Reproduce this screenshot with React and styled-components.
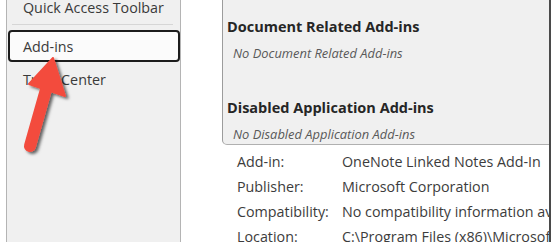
import React from 'react';
import styled, { createGlobalStyle } from 'styled-components';

const GlobalStyle = createGlobalStyle`
  html, body {
    margin: 0;
    padding: 0;
    background: #ffffff;
    overflow: hidden;
  }
  body {
    font-family: "Open Sans", "Noto Sans", Arial, sans-serif;
  }
`;

const Page = styled.div`
  position: relative;
  width: 551px;
  height: 242px;
  display: flex;
  overflow: hidden;
`;

const Nav = styled.nav`
  flex: 0 0 auto;
  margin-left: 6px;
  width: 173px;
  height: 242px;
  background: #f0f0f0;
  border-left: 1px solid #b4b4b4;
  border-right: 1px solid #b4b4b4;
  display: flex;
  flex-direction: column;
`;

const NavList = styled.div`
  margin-top: -9px;
  display: flex;
  flex-direction: column;
  gap: 1px;
`;

const NavItem = styled.div`
  height: 32px;
  box-sizing: border-box;
  margin: 0 0 0 1px;
  padding-left: 13px;
  display: flex;
  align-items: center;
  white-space: nowrap;
  font-size: 14.3px;
  color: #3a3a3a;
  border: 2px solid ${(p) => (p.$active ? '#1c1c1c' : 'transparent')};
  border-radius: 4px;
  background: ${(p) => (p.$active ? '#fbfbfb' : 'transparent')};
`;

const Separator = styled.div`
  height: 1px;
  margin: 0 7px 4px 5px;
  background: #d6d6d6;
`;

const Main = styled.div`
  flex: 0 0 auto;
  margin-left: 41px;
  width: 327px;
  display: flex;
  flex-direction: column;
  border-right: 2px solid #4a4a4a;
  overflow: hidden;
`;

const Panel = styled.div`
  height: 146px;
  box-sizing: border-box;
  padding: 17px 0 0 4px;
  background: #f0f0f0;
  border-left: 1px solid #9c9c9c;
  border-bottom: 1px solid #b0b0b0;
  border-bottom-left-radius: 5px;
`;

const Section = styled.section`
  margin-bottom: ${(p) => p.$gap || 0}px;
`;

const SectionTitle = styled.div`
  font-size: 14.5px;
  font-weight: 700;
  line-height: 20px;
  color: #262626;
  margin-bottom: 6px;
  white-space: nowrap;
`;

const Empty = styled.div`
  padding-left: 6px;
  font-size: 12.9px;
  font-style: italic;
  line-height: 20px;
  color: #595959;
  white-space: nowrap;
`;

const Details = styled.dl`
  margin: 4px 0 0 15px;
  display: grid;
  grid-template-columns: 105px minmax(0, 1fr);
  grid-auto-rows: 25px;
  align-items: center;
  white-space: nowrap;
  font-size: 14.3px;
  color: #3c3c3c;
`;

const Label = styled.dt`
  margin: 0;
`;

const Value = styled.dd`
  margin: 0;
  overflow: hidden;
`;

const Arrow = styled.svg`
  position: absolute;
  left: 0;
  top: 0;
  pointer-events: none;
`;

export default function App() {
  return (
    <>
      <GlobalStyle />
      <Page>
        <Nav>
          <NavList>
            <NavItem>Quick Access Toolbar</NavItem>
            <Separator />
            <NavItem $active>Add-ins</NavItem>
            <NavItem>Trust Center</NavItem>
          </NavList>
        </Nav>
        <Main>
          <Panel>
            <Section $gap={35}>
              <SectionTitle>Document Related Add-ins</SectionTitle>
              <Empty>No Document Related Add-ins</Empty>
            </Section>
            <Section>
              <SectionTitle>Disabled Application Add-ins</SectionTitle>
              <Empty>No Disabled Application Add-ins</Empty>
            </Section>
          </Panel>
          <Details>
            <Label>Add-in:</Label>
            <Value>OneNote Linked Notes Add-In</Value>
            <Label>Publisher:</Label>
            <Value>Microsoft Corporation</Value>
            <Label>Compatibility:</Label>
            <Value>No compatibility information available</Value>
            <Label>Location:</Label>
            <Value>C:\Program Files (x86)\Microsoft Office\root\Office16</Value>
          </Details>
        </Main>
        <Arrow width="120" height="170" viewBox="0 0 120 170">
          <defs>
            <filter id="arrowShadow" x="-30%" y="-30%" width="160%" height="160%">
              <feDropShadow dx="2.5" dy="2" stdDeviation="1.6" floodColor="#000" floodOpacity="0.6" />
            </filter>
          </defs>
          <g filter="url(#arrowShadow)" fill="#f34c3e" stroke="#f34c3e">
            <line x1="47" y1="86" x2="30" y2="146" strokeWidth="12" strokeLinecap="round" />
            <polygon points="53,58 29,84 65,96" strokeWidth="2" strokeLinejoin="round" />
          </g>
        </Arrow>
      </Page>
    </>
  );
}
